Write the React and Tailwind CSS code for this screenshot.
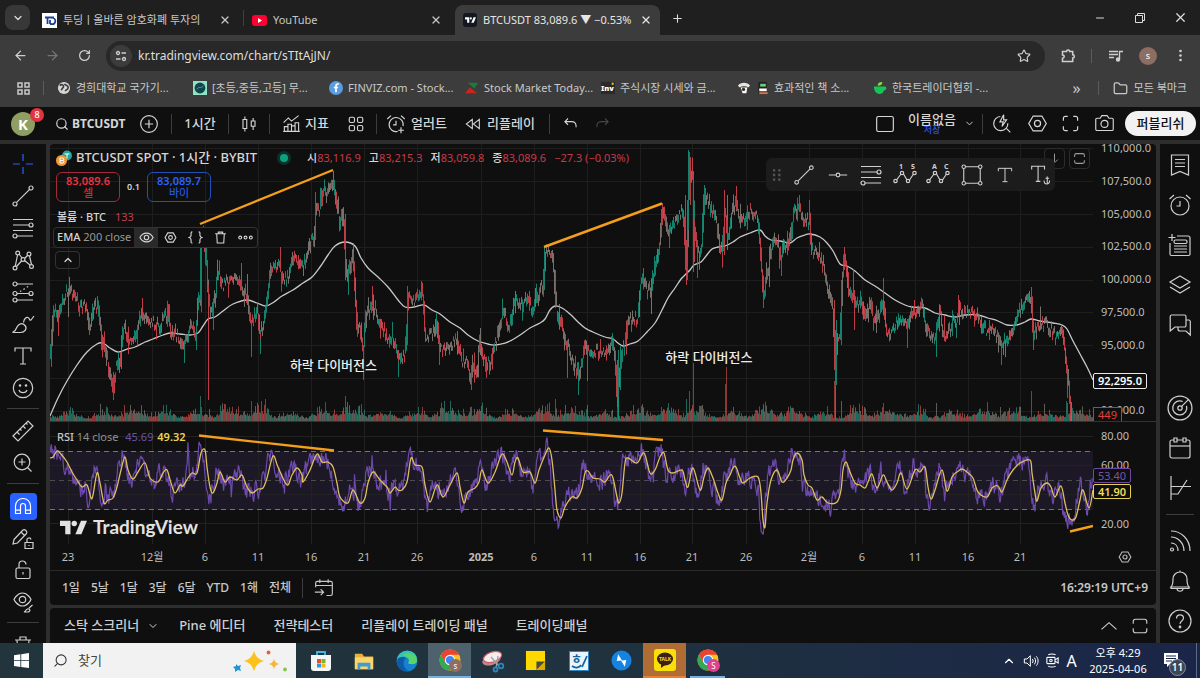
import React from "react";
import { X, Plus, ChevronDown, ChevronUp, ArrowLeft, ArrowRight, RotateCw, Star, Search, Folder, Minus } from "lucide-react";

const kr = "font-['Noto_Sans','Noto_Sans_CJK_KR',sans-serif]";

// small seeded generator so that the chart looks the same on every load
const makeRandom = (seed) => () => {
    seed = (seed * 1664525 + 1013904223) % 4294967296;
    return seed / 4294967296;
};

const parse = (text) => text.trim().split(/\s+/).map((pair) => pair.split(",").map(Number));

const sample = (points, x) => {
    if (x <= points[0][0]) return points[0][1];
    for (let i = 1; i < points.length; i++) {
        if (x <= points[i][0]) {
            const [x0, y0] = points[i - 1];
            const [x1, y1] = points[i];
            return y0 + ((y1 - y0) * (x - x0)) / (x1 - x0 || 1);
        }
    }
    return points[points.length - 1][1];
};

const smooth = (points) => {
    let d = `M${points[0][0]} ${points[0][1]}`;
    for (let i = 1; i < points.length; i++) {
        const [x0, y0] = points[i - 1];
        const [x1, y1] = points[i];
        const before = points[i - 2] || points[i - 1];
        const after = points[i + 1] || points[i];
        const c1 = [x0 + (x1 - before[0]) / 6, y0 + (y1 - before[1]) / 6];
        const c2 = [x1 - (after[0] - x0) / 6, y1 - (after[1] - y0) / 6];
        d += `C${c1.map((n) => n.toFixed(1)).join(" ")} ${c2.map((n) => n.toFixed(1)).join(" ")} ${x1} ${y1}`;
    }
    return d;
};

const price = parse(`50,358 52,337 53,313 57,310 58,317 62,300 70,290 75,298 80,307 83,303 87,307 90,330 93,310 97,303 100,327 102,343 104,350 107,360 110,373 113,390 115,370 118,367 121,350 123,327 125,330 128,340 133,340 137,327 142,313 147,322 153,323 158,327 163,320 168,313 171,337 173,330 177,337 180,337 183,347 187,337 192,325 196,333 198,300 200,293 201,255 202,225 205,247 207,270 209,307 211,307 213,310 216,290 218,267 222,285 227,283 233,280 239,280 243,290 247,297 250,320 253,320 257,307 260,333 263,327 267,300 271,267 275,267 280,267 283,283 288,277 293,260 298,260 303,267 307,255 310,243 314,237 316,207 320,213 323,187 327,197 330,187 333,177 337,203 340,223 343,213 346,270 348,277 353,250 355,290 357,330 360,327 363,353 366,317 372,303 378,317 383,327 388,340 393,337 398,353
403,357 406,350 408,297 413,303 422,290 424,313 425,337 430,337 433,333 437,322 439,350 445,350 452,343 457,342 462,362 467,362 471,380 473,353 475,377 478,360 480,340 483,362 489,365 493,350 497,340 500,323 503,313 510,327 514,300 520,307 527,298 533,310 537,300 541,285 543,295 544,267 546,250 552,257 554,273 556,307 560,320 564,337 568,347 573,360 578,377 582,363 585,343 587,353 593,352 600,352 607,353 612,343 615,357 617,400 620,373 622,353 625,343 628,323 633,320 638,320 640,287 643,280 648,293 652,283 657,257 660,240 662,207 665,220 668,237 673,223 678,215 683,213 685,250 687,273 688,207 689,160 691,170 693,183 694,227 698,257 702,243 704,193 707,198 712,212 717,227 720,250 723,253 725,207 728,237 732,213 736,203 738,215 743,220 750,213 758,215
760,243 762,273 764,300 767,270 768,283 770,253 774,240 778,243 781,263 784,243 788,250 791,233 794,212 799,208 803,217 807,222 810,218 811,250 815,250 820,255 825,273 829,293 833,310 835,357 836,373 837,340 840,340 842,287 844,257 847,273 849,300 852,290 856,310 861,300 866,323 870,297 874,327 878,317 883,297 886,330 892,332 897,322 902,320 908,330 912,310 917,315 922,305 927,330 930,338 936,333 940,313 943,333 947,338 952,322 957,320 959,310 963,315 970,313 977,317 980,320 985,330 992,332 998,337 1002,353 1005,340 1012,332 1017,318 1023,302 1028,300 1031,293 1033,337 1037,328 1042,323 1047,325 1055,337 1062,333 1064,347 1067,373 1069,387 1071,417 1072,430`);

const ema = parse(`50,416 58,398 67,381 77,365 87,352 97,344 103,343 110,348 118,352 127,349 135,347 145,342 153,339 163,335 170,333 180,334 190,335 198,333 203,326 208,319 215,317 223,311 233,304 247,300 257,303 266,306 274,302 282,296 293,290 303,283 312,277 320,267 328,255 335,246 345,242 355,246 361,258 368,268 378,277 388,287 398,300 405,307 414,307 424,305 432,310 440,314 450,322 460,328 468,335 478,341 488,344 495,345 505,343 512,340 520,335 530,328 540,323 545,319 550,310 555,306 562,308 570,314 578,322 585,328 595,333 605,337 613,339 618,343 623,346 630,344 638,341 647,332 655,323 662,310 668,298 675,288 681,279 686,274 690,270 694,265 701,262 706,256 712,249 718,247 725,246 733,242 740,237 750,233 760,230 765,236 771,240 780,241 790,243 797,238 805,235 810,234 820,237 827,243 833,251 840,264 847,266 855,271 865,280 875,286 885,293 895,300 905,305 912,307 925,308 935,313 945,315 955,317 965,315 978,315 988,318 998,321 1007,325 1017,325 1025,322 1031,319 1040,321 1053,323 1062,325 1067,329 1073,341 1080,354 1087,367 1093,380`);

const rsiAverage = parse(`50,458 53,457 57,451 60,453 67,462 72,472 77,480 82,487 87,485 91,498 93,495 97,473 100,483 104,503 108,500 113,498 117,487 121,470 125,457 128,470 133,479 138,472 145,463 150,478 158,482 163,473 167,470 171,483 175,493 180,485 183,486 188,478 192,473 197,473 201,453 205,450 207,467 210,487 213,493 217,483 220,472 225,482 230,477 237,480 242,475 247,487 252,493 258,489 263,488 267,478 273,456 278,467 287,485 292,475 297,468 302,475 303,482 310,470 317,454 322,462 328,462 333,467 337,483 340,497 348,503 353,490 360,503 365,498 368,483 373,472 380,480 387,487 390,493 395,487 398,490
402,490 407,482 411,458 415,465 422,467 425,485 430,502 437,485 443,497 450,485 457,473 460,487 464,503 468,492 475,488 479,482 482,470 488,483 495,472 500,458 503,454 507,462 512,475 515,462 518,458 523,472 530,472 535,483 539,470 545,455 549,448 552,460 555,490 557,510 561,518 565,507 572,497 577,498 582,488 585,473 588,471 593,478 600,479 605,482 610,475 613,478 617,497 619,503 622,493 625,463 628,458 637,463 644,453 650,473 655,470 660,457 664,453 668,470 673,473 682,470 685,480 688,487 693,468 700,490 704,477 708,468 713,478 718,493 722,500 726,483 730,475 733,468 736,467 740,478 743,483 750,478 758,477 761,493 763,520 765,527 767,503 771,480 777,470 782,482 787,478 791,470 793,460 797,453
802,460 804,475 808,485 812,488 817,500 822,497 828,503 837,502 841,490 843,470 846,462 850,472 855,483 860,485 865,488 868,482 872,474 877,488 883,475 887,482 892,490 897,483 901,473 907,489 915,470 920,472 925,467 928,487 931,499 935,490 942,470 947,491 952,477 957,472 962,469 967,472 973,478 978,492 987,497 992,488 998,486 1002,492 1007,480 1013,470 1020,463 1030,460 1032,473 1035,493 1037,501 1041,488 1047,483 1051,487 1055,497 1061,486 1065,503 1068,515 1072,520 1076,517 1080,500 1083,490 1089,508 1093,490`);

// long wicks: x, top, bottom, colour
const wicks = [
    [68, 290, 317, "n"], [58, 310, 336, "r"], [113, 380, 400, "g"], [142, 298, 318, "r"], [168, 304, 318, "r"], [184, 340, 363, "g"], [196, 330, 350, "g"],
    [200, 248, 300, "g"], [201, 248, 312, "g"], [205, 248, 258, "r"], [207, 260, 290, "r"], [208, 285, 400, "r"], [213, 300, 330, "g"], [241, 263, 290, "r"], [247, 274, 305, "n"],
    [251, 320, 357, "g"], [260, 330, 354, "g"], [280, 247, 272, "r"], [315, 192, 240, "g"], [333, 171, 190, "n"], [345, 214, 280, "r"], [348, 270, 295, "g"],
    [353, 243, 262, "n"], [363, 345, 380, "g"], [372, 286, 305, "r"], [398, 350, 377, "g"], [407, 286, 345, "g"], [421, 281, 298, "r"], [439, 340, 365, "g"], [471, 365, 390, "g"], [480, 328, 355, "n"],
    [489, 360, 372, "r"], [544, 248, 290, "g"], [555, 270, 308, "r"], [567, 340, 378, "r"], [578, 375, 395, "g"], [587, 345, 381, "r"], [612, 333, 350, "g"], [617, 360, 407, "r"],
    [618, 350, 420, "g"], [620, 345, 390, "g"], [643, 268, 285, "r"], [651, 285, 314, "n"], [662, 203, 225, "r"], [669, 225, 248, "g"], [685, 195, 270, "r"], [686, 240, 285, "r"], [687, 200, 280, "g"], [688, 150, 230, "g"], [689, 152, 200, "g"],
    [690, 158, 205, "r"], [693, 175, 272, "r"], [694, 220, 262, "r"], [697, 240, 278, "g"], [704, 185, 215, "g"], [705, 188, 205, "r"], [722, 235, 262, "g"], [724, 190, 255, "r"],
    [727, 195, 250, "n"], [736, 186, 210, "r"], [763, 280, 308, "g"], [781, 255, 276, "g"], [799, 195, 212, "r"], [809, 200, 225, "g"], [834, 300, 370, "r"], [835, 330, 420, "g"],
    [836, 320, 385, "g"], [841, 280, 345, "g"], [844, 247, 270, "r"], [853, 269, 300, "r"], [854, 290, 330, "r"], [883, 278, 300, "g"], [907, 320, 348, "g"], [914, 300, 315, "r"], [936, 325, 357, "g"],
    [958, 295, 315, "r"], [959, 300, 325, "n"], [989, 320, 340, "r"], [1001, 345, 365, "g"], [1031, 287, 305, "r"], [1033, 320, 350, "r"], [1067, 365, 398, "g"],
];

const volumeSpikes = { 200: 25, 201: 14, 209: 12, 251: 20, 255: 15, 265: 22, 258: 16, 345: 25, 346: 14, 555: 22, 587: 16, 586: 12, 617: 30, 618: 24, 661: 14, 686: 22, 689: 30, 693: 58, 692: 16, 725: 37, 726: 54, 762: 12, 790: 15, 834: 40, 835: 34, 841: 20, 853: 16, 883: 18, 936: 18, 1000: 14, 1020: 14, 1031: 30, 1066: 20, 1067: 18 };
const redSpikes = [345, 555, 693, 726, 834, 1031];

const buildCandles = () => {
    const random = makeRandom(77);
    const paths = { g: "", r: "", n: "" };
    let kind = "r";
    for (let x = 50; x < 1072; x++) {
        const open = sample(price, x - 0.5);
        const close = sample(price, x + 0.8);
        const drift = (random() - 0.5) * 11;
        const wick = random() < 0.12 ? 8 : 0;
        const top = Math.min(open, close) + drift - 1 - random() * 4 - (random() < 0.5 ? wick : 0);
        const bottom = Math.max(open, close) + drift + 1 + random() * 4 + (random() < 0.5 ? wick : 0);
        const slope = close - open;
        const pick = random();
        if (pick < 0.42) kind = "n";
        else if (pick < 0.62) kind = random() < 0.5 ? "g" : "r";
        else kind = slope < 0 ? "g" : "r";
        paths[kind] += `M${x + 0.5} ${top.toFixed(1)}V${bottom.toFixed(1)}`;
    }
    wicks.forEach(([x, top, bottom, color]) => {
        paths[color] += `M${x + 0.5} ${top}V${bottom}`;
    });
    return paths;
};

const buildVolume = () => {
    const random = makeRandom(9);
    const paths = { g: "", r: "", n: "" };
    for (let x = 50; x < 1093; x++) {
        const swell = 0.9 + 0.6 * Math.sin(x / 5) + 0.4 * Math.sin(x / 17);
        let height = 2 + random() * 3 + Math.abs(swell) * 2.5 + Math.pow(random(), 4) * 9 * Math.abs(swell);
        if (volumeSpikes[x]) height = volumeSpikes[x];
        let kind = "n";
        const pick = random();
        if (pick < 0.28) kind = "g";
        else if (pick < 0.52) kind = "r";
        if (height > 20) kind = redSpikes.includes(x) ? "r" : "g";
        paths[kind] += `M${x + 0.5} 421V${(421 - height).toFixed(1)}`;
    }
    return paths;
};

const buildRsi = () => {
    const random = makeRandom(31);
    let d = "";
    let swing = 0;
    for (let x = 50; x <= 1093; x += 0.7) {
        const lead = sample(rsiAverage, x + 2);
        const slope = lead - sample(rsiAverage, x - 3);
        swing = swing * 0.4 + (random() - 0.5) * 17;
        if (random() < 0.03) swing += (random() - 0.5) * 52;
        const y = Math.max(436, Math.min(534, lead + slope * 0.3 + swing));
        d += `${d ? "L" : "M"}${x.toFixed(1)} ${y.toFixed(1)}`;
    }
    return d;
};

const candles = buildCandles();
const volume = buildVolume();
const rsiLine = buildRsi();

const dates = [
    ["23", 68], ["12월", 152], ["6", 205], ["11", 258], ["16", 311], ["21", 364], ["26", 417], ["2025", 481], ["6", 534],
    ["11", 587], ["16", 640], ["21", 692], ["26", 746], ["2월", 809], ["6", 862], ["11", 915], ["16", 968], ["21", 1020],
];

const Glyph = ({ size = 24, width = 1.2, children, className = "" }) => (
    <svg width={size} height={size} viewBox="0 0 24 24" fill="none" stroke="currentColor" strokeWidth={width} className={`shrink-0 ${className}`} aria-hidden="true">
        {children}
    </svg>
);

const IconButton = ({ label, className = "", children }) => (
    <button type="button" aria-label={label} className={`flex items-center justify-center shrink-0 ${className}`}>
        {children}
    </button>
);

const Divider = () => <span className="w-px h-5 bg-[#3d3d3d] shrink-0" />;

const TrendGlyph = (props) => (
    <Glyph {...props}>
        <path d="M5.6 18.4 18.4 5.6" />
        <circle cx="20" cy="4" r="2" />
        <circle cx="4" cy="20" r="2" />
    </Glyph>
);

const FibGlyph = (props) => (
    <Glyph {...props}>
        <path d="M2 3.5h20M2 9h16M2 14.5h20M6 20h16" />
        <circle cx="20" cy="9" r="2" />
        <circle cx="4" cy="20" r="2" />
    </Glyph>
);

const TextGlyph = (props) => (
    <Glyph {...props}>
        <path d="M4 7.5V4h16v3.5M12 4v16M9 20h6" />
    </Glyph>
);

const HexGlyph = (props) => (
    <Glyph {...props}>
        <path d="M7 3.5h10l5 8.5-5 8.5H7L2 12z" />
        <circle cx="12" cy="12" r="3.5" />
    </Glyph>
);

const CornersGlyph = (props) => (
    <Glyph {...props}>
        <path d="M3 8.500V5.500A2.500 2.500 0 0 1 5.500 3H8.500M15.500 3h3A2.500 2.500 0 0 1 21 5.500v3M21 15.500v3a2.500 2.500 0 0 1-2.500 2.500h-3M8.500 21h-3A2.500 2.500 0 0 1 3 18.500v-3" />
    </Glyph>
);

const FrameGlyph = (props) => (
    <Glyph {...props}>
        <path d="M3 9V6a3 3 0 0 1 3-3h12a3 3 0 0 1 3 3v3M3 15v3a3 3 0 0 0 3 3h12a3 3 0 0 0 3-3v-3" />
    </Glyph>
);

const EyeGlyph = (props) => (
    <Glyph {...props}>
        <path d="M1.500 12S5 5 12 5s10.500 7 10.500 7S19 19 12 19 1.500 12 1.500 12z" />
        <circle cx="12" cy="12" r="3.600" />
    </Glyph>
);

const AlarmGlyph = ({ add, ...props }) => (
    <Glyph {...props}>
        {add ? <path d="M20.500 14.500A8.500 8.500 0 1 0 14 21M18 16v7M14.500 19.500h7" /> : <circle cx="12" cy="13" r="9" />}
        <path d="M12 8v5H8.500M1.500 6 6 2M22.500 6 18 2" />
    </Glyph>
);

const TvMark = ({ className }) => (
    <svg viewBox="0 0 36 20" className={className} fill="currentColor" aria-hidden="true">
        <path d="M0 1h14v18H7V8H0z" />
        <circle cx="19" cy="4.600" r="3.600" />
        <path d="M28 1h8l-7.500 18h-8z" />
    </svg>
);

const ChromeLogo = ({ badge, color }) => (
    <svg viewBox="0 0 28 28" className="w-7 h-7" aria-hidden="true">
        <circle cx="14" cy="14" r="10.500" fill="#fbc116" />
        <path d="M4.900 8.700A10.500 10.500 0 0 0 14 24.500L18.600 16.600 9.400 16.600z" fill="#34a853" />
        <path d="M4.900 8.700A10.500 10.500 0 0 1 23.100 8.700H14L9.400 16.600z" fill="#ea4335" />
        <circle cx="14" cy="14" r="5.200" fill="#fff" />
        <circle cx="14" cy="14" r="4.100" fill="#4285f4" />
        <circle cx="19.500" cy="19.500" r="6.500" fill={color} />
        <text x="19.500" y="22.500" fontSize="8" fontFamily="Noto Sans" textAnchor="middle" fill="#fff">{badge}</text>
    </svg>
);

/* ---------- browser ---------- */

const BrowserTab = ({ icon, title, active, className = "" }) => (
    <div className={`flex items-center h-[30px] ${active ? "bg-[#3c3c3c] rounded-t-lg text-[#e6e6e6]" : "text-[#c7c7c7]"} ${className}`}>
        {icon}
        <span className="ml-[6px] flex-1 min-w-0 overflow-hidden whitespace-nowrap text-[11px]">{title}</span>
        <IconButton label="탭 닫기" className="w-7 h-6"><X size={12} strokeWidth={2.500} /></IconButton>
    </div>
);

const TabStrip = () => (
    <div className="flex items-end h-[35px] bg-[#1f1f1f] text-[#dcdcdc]">
        <IconButton label="탭 검색" className="ml-[5px] mb-[5px] w-[25px] h-[25px] rounded-lg bg-[#383838]"><ChevronDown size={12} strokeWidth={2.500} /></IconButton>
        <BrowserTab
            className="w-[213px] pl-3 pr-1"
            title="투딩ㅣ올바른 암호화폐 투자의"
            icon={
                <svg viewBox="0 0 15 15" className="w-[15px] h-[15px] shrink-0">
                    <rect width="15" height="15" fill="#fff" />
                    <path d="M3 4.500h9M5.500 4.500v6.500M8 11V7M8 11h1.500a3 3 0 0 0 1.500-6" stroke="#1c3f94" strokeWidth="1.800" fill="none" />
                </svg>
            }
        />
        <span className="w-px h-4 mb-[9px] bg-[#3f3f3f]" />
        <BrowserTab
            className="w-[206px] pl-2"
            title="YouTube"
            icon={
                <svg viewBox="0 0 15 11" className="w-[15px] h-[11px] shrink-0">
                    <rect width="15" height="11" rx="3" fill="#f03" />
                    <path d="M6 3v5l4-2.500z" fill="#fff" />
                </svg>
            }
        />
        <BrowserTab
            active
            className="ml-[5px] w-[205px] pl-2"
            title="BTCUSDT 83,089.6 ▼ −0.53%"
            icon={<span className="flex items-center justify-center w-[14px] h-[14px] rounded-[3px] bg-[#131722] text-white shrink-0"><TvMark className="w-[11px]" /></span>}
        />
        <IconButton label="새 탭" className="mb-1 w-[34px] h-[26px]"><Plus size={13} /></IconButton>
        <div className="ml-auto flex h-full">
            <IconButton label="최소화" className="w-10"><Minus size={12} strokeWidth={2} /></IconButton>
            <IconButton label="이전 크기로" className="w-10">
                <svg viewBox="0 0 10 10" width="10" height="10" fill="none" stroke="currentColor"><path d="M.5 2.500h7v7h-7zM2.500 2.500v-2h7v7h-2" /></svg>
            </IconButton>
            <IconButton label="닫기" className="w-10"><X size={15} strokeWidth={2} /></IconButton>
        </div>
    </div>
);

const AddressRow = () => (
    <div className="flex items-center h-[41px] bg-[#3c3c3c] text-[#d0d0d0]">
        <IconButton label="뒤로" className="ml-1 w-8"><ArrowLeft size={15} /></IconButton>
        <IconButton label="앞으로" className="w-8 text-[#757575]"><ArrowRight size={15} /></IconButton>
        <IconButton label="새로고침" className="w-8"><RotateCw size={13} strokeWidth={2.300} /></IconButton>
        <label className="ml-[6px] flex items-center flex-1 h-[30px] rounded-full bg-[#282828] pl-1">
            <span className="flex items-center justify-center w-[22px] h-[22px] rounded-full bg-[#3c3c3c]">
                <svg viewBox="0 0 12 12" width="12" height="12" fill="none" stroke="currentColor" strokeWidth="1.300">
                    <circle cx="3" cy="3" r="1.500" /><path d="M6.500 3H11M1 9h4.500" /><circle cx="9" cy="9" r="1.500" />
                </svg>
            </span>
            <input aria-label="주소창" defaultValue="kr.tradingview.com/chart/sTItAjJN/" className="flex-1 ml-[6px] bg-transparent text-xs text-[#dedede] outline-none" />
            <Star size={14} className="mr-[14px]" />
        </label>
        <IconButton label="확장 프로그램" className="ml-2 w-[30px]">
            <svg viewBox="0 0 15 15" width="15" height="15" fill="none" stroke="currentColor" strokeWidth="1.500"><path d="M1.500 3.500h4a1.600 1.600 0 0 1 3.200 0h3v3.300a1.600 1.600 0 0 1 0 3.200v3.500H1.500v-3.200a1.700 1.700 0 0 0 0-3.400z" /></svg>
        </IconButton>
        <span className="ml-2 w-px h-[14px] bg-[#5c5c5c]" />
        <IconButton label="미디어 제어" className="ml-2 w-8">
            <svg viewBox="0 0 14 12" width="14" height="12" fill="none" stroke="currentColor" strokeWidth="1.400"><path d="M0 1.500h9M0 4.500h9M0 7.500h5M10.500 9.500V1.500H14" /><circle cx="9" cy="9.500" r="1.500" fill="currentColor" /></svg>
        </IconButton>
        <IconButton label="프로필" className="w-8"><span className="w-[18px] h-[18px] rounded-full bg-[#8d6e63] text-white text-[9px] leading-[17px]">s</span></IconButton>
        <IconButton label="메뉴" className="w-8">
            <svg viewBox="0 0 3 13" width="3" height="13" fill="currentColor"><circle cx="1.500" cy="2" r="1.300" /><circle cx="1.500" cy="6.500" r="1.300" /><circle cx="1.500" cy="11" r="1.300" /></svg>
        </IconButton>
        <span className="w-1" />
    </div>
);

const bookmarks = [
    {
        title: "경희대학교 국가기...",
        icon: <><circle cx="7.500" cy="7.500" r="6.500" fill="#d6d6d6" /><path d="M3 5c2-2 4-1 4 1S4 8 5 10M8 3c1 2 4 1 4 4s-3 2-3 4" stroke="#3c3c3c" strokeWidth="1.800" fill="none" /></>,
    },
    {
        title: "[초등,중등,고등] 무...",
        icon: <><rect width="15" height="15" fill="#8fe3c4" /><circle cx="7.500" cy="7.500" r="5.800" fill="#12454a" /><path d="M4 9c2-4 5 0 7-4" stroke="#4f9ea0" fill="none" /></>,
    },
    {
        title: "FINVIZ.com - Stock...",
        icon: <><circle cx="7.500" cy="7.500" r="7.500" fill="#5b9be0" /><path d="M10.500 3.500C8 2.500 7.500 4 7.500 6v6M5.200 7h4.500" stroke="#fff" strokeWidth="1.800" fill="none" /></>,
    },
    {
        title: "Stock Market Today...",
        icon: <><path d="M3 2h11l-4 6z" fill="#1e7a3b" /><path d="M0 13l5-6 8 6z" fill="#d0211c" /></>,
    },
    {
        title: "주식시장 시세와 금...",
        icon: <><rect y="1" width="15" height="13" fill="#2a2a2a" /><text x="0" y="11" fontSize="8" fontFamily="Noto Sans" fontWeight="900" fill="#fff">Inv</text><circle cx="12.500" cy="3" r="1.300" fill="#f5a623" /></>,
    },
    {
        title: "효과적인 책 소...",
        icon: <><path d="M1 5c3-4 10-4 13 0l-2 2c-2-2-7-2-9 0z" fill="#e8e4dc" /><path d="M4 7h7l-1 6H6z" fill="#fff" /><circle cx="7" cy="9" r="1.800" fill="#35302c" /></>,
        extra: <><rect x="1" y="1" width="9" height="13" fill="#222" /><path d="M3 3h6v3H3z" fill="#6bd07a" /><path d="M2 8h8v3H2z" fill="#fff" /><path d="M2 12h9v2H2z" fill="#e0714a" /></>,
    },
    {
        title: "한국트레이더협회 -...",
        icon: <><path d="M1 6h11c3-1 3 4 0 4-1 3-3 4-5 4-4 0-6-4-6-8z" fill="#17c258" /><path d="M5 5c0-3 2-4 5-4 0 3-2 4-5 4z" fill="#8bdc3a" /></>,
    },
];

const BookmarkBar = () => (
    <div className="flex items-center h-[31px] bg-[#3c3c3c] pb-[7px] text-[11px] text-[#c9c9c9] whitespace-nowrap">
        <IconButton label="앱" className="ml-4 w-[14px]">
            <svg viewBox="0 0 13 13" width="13" height="13" fill="none" stroke="currentColor" strokeWidth="1.500"><path d="M1 1h4v4H1zM8 1h4v4H8zM1 8h4v4H1zM8 8h4v4H8z" /></svg>
        </IconButton>
        <span className="ml-[13px] mr-[13px] w-px h-[14px] bg-[#5c5c5c]" />
        <div className="flex">
            {bookmarks.map((item) => (
                <a key={item.title} href="#bookmark" className="flex items-center w-[136px]">
                    <svg viewBox="0 0 15 15" className="w-[14px] h-[14px] shrink-0">{item.icon}</svg>
                    {item.extra && <svg viewBox="0 0 12 15" className="ml-[6px] w-3 h-[14px] shrink-0">{item.extra}</svg>}
                    <span className="ml-[5px]">{item.title}</span>
                </a>
            ))}
        </div>
        <IconButton label="북마크 더보기" className="ml-auto w-5 text-[16px] leading-none">»</IconButton>
        <span className="ml-[11px] mr-[14px] w-px h-[14px] bg-[#5c5c5c]" />
        <a href="#all" className="flex items-center gap-[6px] mr-[13px]"><Folder size={15} />모든 북마크</a>
    </div>
);

/* ---------- chart page ---------- */

const TopBar = () => (
    <div className="flex items-center h-[33px] bg-[#0f0f0f] text-[#d6d6d6] text-[13px] font-medium whitespace-nowrap">
        <button type="button" className="relative ml-[11px] w-6 h-6 shrink-0 rounded-full bg-[#8f9e62] text-white text-[15px] leading-6 font-bold">
            K
            <span className="absolute -top-[4px] left-[19px] w-[14px] h-[14px] rounded-full bg-[#e0343f] text-[9px] leading-[14px] font-medium">8</span>
        </button>
        <button type="button" className="flex items-center gap-[3px] ml-5 w-[72px] text-xs font-bold"><Search size={14} strokeWidth={2} className="shrink-0" />BTCUSDT</button>
        <IconButton label="심볼 비교" className="w-11"><Glyph size={20} width={1.400}><circle cx="12" cy="12" r="10" /><path d="M12 7v10M7 12h10" /></Glyph></IconButton>
        <Divider />
        <button type="button" className="w-14">1시간</button>
        <Divider />
        <IconButton label="캔들" className="w-10"><Glyph size={18} width={1.500}><path d="M4 6h5v12H4zM6.500 2v4M6.500 18v4M15 8h5v7h-5zM17.500 4v4M17.500 15v5" /></Glyph></IconButton>
        <Divider />
        <button type="button" className="flex items-center gap-1 w-[66px] pl-3">
            <Glyph size={19} width={1.400}><path d="M1.500 22h21M3 22v-6h4.500v6M7.500 22v-9H12v9M12 22v-7h4.500v7M16.500 22V11H21v11M2 11l6-6 4 4 9-7" /></Glyph>지표
        </button>
        <IconButton label="템플릿" className="w-10"><Glyph size={18} width={1.500}><rect x="3" y="3" width="7" height="7" rx="2" /><rect x="14" y="3" width="7" height="7" rx="2" /><rect x="3" y="14" width="7" height="7" rx="2" /><rect x="14" y="14" width="7" height="7" rx="2" /></Glyph></IconButton>
        <Divider />
        <button type="button" className="flex items-center gap-[5px] w-20 pl-[9px]"><AlarmGlyph add size={20} width={1.400} />얼러트</button>
        <button type="button" className="flex items-center gap-[6px] w-[92px] pl-2"><Glyph size={16} width={1.600}><path d="M11 5v14L2 12zM21.500 5v14l-9-7z" /></Glyph>리플레이</button>
        <Divider />
        <IconButton label="되돌리기" className="w-10"><Glyph size={15} width={1.700}><path d="M8 4 3 9l5 5M3 9h11c5 0 7 3 7 8v1" /></Glyph></IconButton>
        <IconButton label="다시하기" className="w-6 text-[#474747]"><Glyph size={15} width={1.700}><path d="m16 4 5 5-5 5M21 9H10c-5 0-7 3-7 8v1" /></Glyph></IconButton>
        <div className="ml-auto flex items-center">
            <IconButton label="레이아웃" className="w-11"><Glyph size={20} width={1.400}><rect x="2" y="3" width="20" height="18" rx="2" /></Glyph></IconButton>
            <button type="button" className="w-[50px] leading-[12px]">이름없음<span className="block text-[9px] leading-[9px] text-[#2f55e0]">저장</span></button>
            <IconButton label="레이아웃 관리" className="w-[25px]"><ChevronDown size={11} strokeWidth={2} /></IconButton>
            <Divider />
            <IconButton label="빠른 검색" className="w-[38px]"><Glyph size={20} width={1.400}><path d="M10 3a8.500 8.500 0 1 0 9 8M17 17l5 5M14 1 9.500 9.500h4L12 15l5.500-8H14z" /></Glyph></IconButton>
            <IconButton label="설정" className="w-[33px]"><HexGlyph size={21} width={1.400} /></IconButton>
            <IconButton label="전체 화면" className="w-[33px]"><CornersGlyph size={19} width={1.500} /></IconButton>
            <IconButton label="스냅샷" className="w-[34px] mr-1"><Glyph size={21} width={1.300}><path d="M2 7.500A1.500 1.500 0 0 1 3.500 6H7l2-3h6l2 3h3.500A1.500 1.500 0 0 1 22 7.500v11a1.500 1.500 0 0 1-1.500 1.500h-17A1.500 1.500 0 0 1 2 18.500z" /><circle cx="12" cy="12.500" r="4" /></Glyph></IconButton>
            <button type="button" className="w-[71px] h-[25px] mr-1 rounded-full bg-[#f2f2f2] text-[#0f0f0f]">퍼블리쉬</button>
        </div>
    </div>
);

const drawTools = [
    ["십자선", <Glyph key="i" className="text-[#2962ff]"><path d="M12 2v7M12 15v7M2 12h7M15 12h7" /></Glyph>],
    ["추세줄", <TrendGlyph key="i" />],
    ["피보나치", <FibGlyph key="i" />],
    ["패턴", <Glyph key="i"><path d="M4.300 18 6.500 7M8 6l3 4M13.500 10.500 16.500 7.500M18.500 8l2 8.500M19 17l-5.500-4.500M10.500 13 5.500 18.500" /><circle cx="6.700" cy="5" r="1.900" /><circle cx="18" cy="6" r="1.900" /><circle cx="12" cy="11.500" r="1.900" /><circle cx="4" cy="20" r="1.900" /><circle cx="20.500" cy="18.500" r="1.900" /></Glyph>],
    ["예측", <Glyph key="i"><path d="M6 4h16M6 13.500h12M6 20h16" /><path d="M9 11.500 18 6" strokeDasharray="1.500 2.500" /><circle cx="4" cy="4" r="2" /><circle cx="4" cy="13.500" r="2" /><circle cx="20" cy="13.500" r="2" /><circle cx="4" cy="20" r="2" /></Glyph>],
    ["브러쉬", <Glyph key="i"><path d="M1.500 20.500h8c4.500 0 7-4 4.500-7s-6.500-2-8 1.500c-.8 2.500-1.500 4-4.500 5.500zM12.500 10.500C13 7 15 5 17 5.500s1 3.500 3 2.500l3-4" /></Glyph>],
    ["문자", <TextGlyph key="i" />],
    ["아이콘", <Glyph key="i"><circle cx="12" cy="12" r="9.700" /><path d="M8 14c1 3.500 7 3.500 8 0" /><circle cx="9" cy="9.500" r=".7" /><circle cx="15" cy="9.500" r=".7" /></Glyph>],
    null,
    ["자", <Glyph key="i"><path d="M2 17 17 2l5 5L7 22zM6 13l2.500 2.500M9 10l1.500 1.500M12 7l2.500 2.500M15 4l1.500 1.500" /></Glyph>],
    ["확대", <Glyph key="i"><circle cx="11" cy="11" r="7.800" /><path d="M11 7.500v7M7.500 11h7M16.500 16.500l4 4" /></Glyph>],
    null,
    ["자석", <span key="i" className="flex items-center justify-center w-[27px] h-[27px] rounded bg-[#2962ff] text-white"><Glyph size={20} width={1.400}><path d="M3 21v-9a9 9 0 0 1 18 0v9h-6v-9a3 3 0 0 0-6 0v9zM3 17h6M15 17h6" /></Glyph></span>],
    ["드로잉 유지", <Glyph key="i"><path d="m3 13.500 9-9.500c1.500-1.500 5 1.500 3.500 3.500l-9 9.500L2 18zM10 6l4 4M14 16.500h8v6h-8zM16 16.500v-2a2 2 0 0 1 4-1M18 19v1" /></Glyph>],
    ["잠금", <Glyph key="i"><rect x="5" y="10" width="14" height="10.500" rx="1.500" /><path d="M8 10V6.500a3.500 3.500 0 0 1 7 0M12 14v2.500" /></Glyph>],
    ["숨기기", <Glyph key="i"><path d="M3 9.500S6 3 11.500 3 20 9.500 20 9.500 17 16 11.500 16 3 9.500 3 9.500z" /><circle cx="11.500" cy="9.500" r="3.200" /><path d="M13 22h4c3-.5 2-4-.5-3s-1 2-3.500 3zM18 18l3.500-3" /></Glyph>],
    null,
    ["삭제", <Glyph key="i"><path d="M4 7h16M9 7V4h6v3M6 7l1 14h10l1-14" /></Glyph>],
];

const LeftTools = () => (
    <nav aria-label="드로잉" className="w-[46px] shrink-0 flex flex-col items-center pt-1 bg-[#0f0f0f] text-[#cfcfcf] overflow-hidden">
        {drawTools.map((tool, i) =>
            tool ? (
                <IconButton key={i} label={tool[0]} className="w-full h-8">{tool[1]}</IconButton>
            ) : (
                <span key={i} className="mt-1 mb-[6px] w-8 h-px shrink-0 bg-[#3d3d3d]" />
            )
        )}
    </nav>
);

const RightTools = () => (
    <nav aria-label="위젯" className="w-10 shrink-0 flex flex-col items-center pt-px pb-[2px] bg-[#0f0f0f] text-[#cfcfcf]">
        <IconButton label="왓치리스트" className="h-10"><Glyph><path d="M3.500 2h17v20L12 18.500 3.500 22zM7 6.500h10M7 10h10M7 13.500h10" /></Glyph></IconButton>
        <IconButton label="얼러트" className="h-10"><AlarmGlyph /></IconButton>
        <IconButton label="뉴스" className="h-10"><Glyph><path d="M9 3h11a2 2 0 0 1 2 2v16a1.500 1.500 0 0 1-1.500 1.500h-17A1.500 1.500 0 0 1 2 21V10M4 1v7M.5 4.500h7M6 13h13M6 16h13M6 19h13" /><rect x="6" y="7" width="13" height="3.500" rx="1.500" /></Glyph></IconButton>
        <IconButton label="오브젝트 트리" className="h-10"><Glyph><path d="m12 3 10 6-10 6L2 9zM2 14l10 6 10-6" /></Glyph></IconButton>
        <IconButton label="챗" className="h-10"><Glyph><path d="M3.500 2h13A1.500 1.500 0 0 1 18 3.500v9a1.500 1.500 0 0 1-1.500 1.500H7l-4.800 4V3.500A1.500 1.500 0 0 1 3.500 2zM18 7h3a1.500 1.500 0 0 1 1.300 1.500V22L18 18h-6a2 2 0 0 1-2-2v-2" /></Glyph></IconButton>
        <IconButton label="스크리너" className="mt-auto h-10"><Glyph size={26}><circle cx="12" cy="12" r="11" /><path d="M18 10a6.500 6.500 0 1 1-3.500-4" /><circle cx="12" cy="12" r="2" /><path d="m13.500 10.500 6-6" /></Glyph></IconButton>
        <IconButton label="캘린더" className="h-10"><Glyph><rect x="2" y="4" width="20" height="18" rx="2" /><path d="M2 10h20" /><path d="M6 2h3v4H6zM15 2h3v4h-3z" fill="#0f0f0f" /></Glyph></IconButton>
        <IconButton label="파인" className="h-10"><Glyph><path d="M3 0v24M3 18h7l9-14M3 10.500h20" /></Glyph></IconButton>
        <span className="w-7 h-px my-[6px] bg-[#3d3d3d]" />
        <IconButton label="스트림" className="h-10"><Glyph><path d="M3 2c10 0 19 8 19 20M3 8c7 0 13 6 13 14M3 14c4 0 7 3 7 8" /><circle cx="4" cy="20.500" r="1.500" /></Glyph></IconButton>
        <IconButton label="알림" className="h-10"><Glyph><path d="M3 18c1.500-1.500 2-3 2-8 0-4 3-7 7-7s7 3 7 7c0 5 .5 6.500 2 8zM3 18v1.500h18V18M9 20c.5 3 5.500 3 6 0M12 3V1.500" /></Glyph></IconButton>
        <IconButton label="도움말" className="h-10"><Glyph><circle cx="12" cy="12" r="11" /><path d="M8.500 9.500c0-5 7-4.500 7-.5 0 3-3.500 3-3.500 6" /><circle cx="12" cy="18" r=".8" /></Glyph></IconButton>
    </nav>
);

const ohlc = [["시", "83,116.9"], ["고", "83,215.3"], ["저", "83,059.8"], ["종", "83,089.6"]];

const Legend = () => (
    <div className="absolute top-[5px] left-[3px] flex flex-col items-start text-[#d6d6d6] whitespace-nowrap">
        <div className="flex items-center h-[18px] pl-[3px]">
            <svg viewBox="0 0 16 16" className="w-4 h-4">
                <circle cx="11" cy="5.500" r="5" fill="#22a79a" /><path d="M8.500 4h5M11 4v4.500" stroke="#fff" />
                <circle cx="5.500" cy="10.500" r="5.500" fill="#f09a37" /><path d="M4 8h2.500a1.200 1.200 0 0 1 0 2.500H4zM4 10.500h3a1.300 1.300 0 0 1 0 2.500H4z" stroke="#fff" fill="none" />
            </svg>
            <span className="ml-1 text-[13px] font-medium">BTCUSDT SPOT · 1시간 · BYBIT</span>
            <span className="ml-5 flex items-center justify-center w-[14px] h-[14px] rounded-full bg-[#08322b]"><span className="w-2 h-2 rounded-full bg-[#0da27f]" /></span>
            <div className="flex gap-2 ml-4 text-[11px]">
                {ohlc.map(([name, value]) => <span key={name} className="font-medium">{name}<span className="font-normal text-[#c73a4a]">{value}</span></span>)}
                <span className="text-[#c73a4a]">−27.3 (−0.03%)</span>
            </div>
        </div>
        <div className="flex items-center mt-[5px] ml-[3px] text-[11px] font-semibold leading-[12px]">
            <button type="button" className="w-16 h-[30px] rounded-md border border-[#a52a3a] text-[#f0313f]">83,089.6<span className="block font-normal">셀</span></button>
            <span className="w-[27px] text-center text-[9px]">0.1</span>
            <button type="button" className="w-16 h-[30px] rounded-md border border-[#2350b8] text-[#2962ff]">83,089.7<span className="block font-normal">바이</span></button>
        </div>
        <div className="mt-[7px] ml-1 text-[11px] leading-4 font-medium">볼륨 · BTC <span className="ml-[6px] font-normal text-[#c73a4a]">133</span></div>
        <div className="flex items-center mt-[2px] h-[21px] rounded-sm border border-[#333] bg-[#0f0f0f] text-[11px]">
            <span className="pl-[3px] pr-[3px] font-medium">EMA <span className="font-normal text-[#999]">200 close</span></span>
            <IconButton label="숨기기" className="w-6 h-full bg-[#2a2a2a]"><EyeGlyph size={15} width={1.800} /></IconButton>
            <IconButton label="설정" className="w-[25px]"><HexGlyph size={13} width={2} /></IconButton>
            <IconButton label="소스 코드" className="w-[25px]"><Glyph size={15} width={1.800}><path d="M7 3C4 3 5 6 5 8s0 3-3 4c3 1 3 2 3 4s-1 5 2 5M17 3c3 0 2 3 2 5s0 3 3 4c-3 1-3 2-3 4s1 5-2 5" /></Glyph></IconButton>
            <IconButton label="지우기" className="w-[25px]"><Glyph size={13} width={2}><path d="M2 5h20M8 5V2h8v3M5 5l1 17h12l1-17" /></Glyph></IconButton>
            <IconButton label="더보기" className="w-6"><Glyph size={15} width={1.800}><circle cx="3.500" cy="12" r="2.300" /><circle cx="12" cy="12" r="2.300" /><circle cx="20.500" cy="12" r="2.300" /></Glyph></IconButton>
        </div>
        <IconButton label="접기" className="mt-[3px] ml-[2px] w-[25px] h-[18px] border border-[#333] rounded-sm"><ChevronUp size={12} strokeWidth={2.500} /></IconButton>
    </div>
);

const Wave = ({ from, to }) => (
    <Glyph>
        <path d="M3.500 17 8 11M10.500 11l3.500 6M16.500 17l4-6" />
        <circle cx="2.500" cy="18" r="1.700" /><circle cx="9" cy="10" r="1.700" /><circle cx="15" cy="18" r="1.700" /><circle cx="21.500" cy="10" r="1.700" />
        <text x="6" y="6" fontSize="7" fontFamily="Noto Sans" fontWeight="700" fill="currentColor" stroke="none">{from}</text>
        <text x="18" y="6" fontSize="7" fontFamily="Noto Sans" fontWeight="700" fill="currentColor" stroke="none">{to}</text>
    </Glyph>
);

const FloatingTools = () => (
    <div className="absolute top-[14px] right-[38px] flex items-center h-[33px] rounded-md bg-[#1e1e1e]/95 text-[#cfcfcf]">
        <IconButton label="이동" className="w-[21px] text-[#555]"><Glyph size={14} width={0}><path fill="currentColor" d="M5 2h4v4H5zM14 2h4v4h-4zM5 10h4v4H5zM14 10h4v4h-4zM5 18h4v4H5zM14 18h4v4h-4z" /></Glyph></IconButton>
        <IconButton label="추세줄" className="w-[34px]"><TrendGlyph size={22} /></IconButton>
        <IconButton label="가로줄" className="w-[33px]"><Glyph size={22}><path d="M2 12h8M14 12h8" /><circle cx="12" cy="12" r="2" /></Glyph></IconButton>
        <IconButton label="피보나치" className="w-[34px]"><FibGlyph /></IconButton>
        <IconButton label="엘리엇 파동" className="w-[33px]"><Wave from="1" to="5" /></IconButton>
        <IconButton label="ABC 파동" className="w-[34px]"><Wave from="A" to="C" /></IconButton>
        <IconButton label="네모" className="w-[33px]"><Glyph size={22}><path d="M5 3h14M5 21h14M3 5v14M21 5v14" /><circle cx="3" cy="3" r="1.900" /><circle cx="21" cy="3" r="1.900" /><circle cx="3" cy="21" r="1.900" /><circle cx="21" cy="21" r="1.900" /></Glyph></IconButton>
        <IconButton label="문자" className="w-[34px]"><TextGlyph size={20} /></IconButton>
        <IconButton label="고정 문자" className="w-[33px]"><Glyph size={22}><path d="M4 6V2.500h14V6M11 2.500V19M8.500 19h5M21 13.500V22M17.500 18c0 5 6 5 6 0M19 15.500h4" /></Glyph></IconButton>
    </div>
);

const PricePane = () => (
    <div className="relative flex min-h-0 basis-0 grow-[277]">
        <div className="relative flex-1 min-w-0">
            <svg viewBox="50 144 1043 277" preserveAspectRatio="none" className="absolute inset-0 w-full h-full">
                <g stroke="#1e1e1e">
                    {[148.5, 181.500, 214.500, 247.500, 280.500, 312.500, 345.500, 378.500, 411.500].map((y) => <path key={y} d={`M50 ${y}H1093`} />)}
                    {dates.map(([, x]) => <path key={x} d={`M${x + 0.5} 144V421`} />)}
                </g>
                <g opacity="0.620">
                    <path d={volume.n} stroke="#8d8a80" />
                    <path d={volume.g} stroke="#2f9c88" />
                    <path d={volume.r} stroke="#e0524f" />
                </g>
                <path d={smooth(ema)} fill="none" stroke="#c8c8c8" strokeWidth="1.300" />
                <g opacity="0.850">
                    <path d={candles.n} stroke="#8a827c" />
                    <path d={candles.g} stroke="#16957e" />
                    <path d={candles.r} stroke="#dc4450" />
                </g>
                <path d="M200 224 333 170M544 247 662 203.500" stroke="#f59e1b" strokeWidth="2.400" />
            </svg>
            <Legend />
            <span className="absolute left-[23%] top-[77%] text-[13px] leading-[17px] font-medium text-[#ededed]">하락 다이버전스</span>
            <span className="absolute left-[59%] top-[74%] text-[13px] leading-[17px] font-medium text-[#ededed]">하락 다이버전스</span>
            <div className="absolute top-1 right-[3px] flex gap-1 text-[#9a9a9a]">
                <IconButton label="아래로" className="w-[21px] h-[21px] rounded border border-[#2c2c2c]"><Glyph size={13} width={1.800}><path d="M12 3v17M6 14l6 6 6-6" /></Glyph></IconButton>
                <IconButton label="최대화" className="w-[21px] h-[21px] rounded border border-[#2c2c2c]"><FrameGlyph size={13} width={2} /></IconButton>
            </div>
            <FloatingTools />
        </div>
        <div className="w-[63px] shrink-0 flex flex-col justify-between pl-2 pb-[7px] text-[11px] leading-[8px] text-[#bdbdbd]">
            {["110,000.0", "107,500.0", "105,000.0", "102,500.0", "100,000.0", "97,500.0", "95,000.0", "", "90,000.0"].map((label, i) => <span key={i} className="h-2">{label}</span>)}
        </div>
        <span className="absolute right-[9px] bottom-[32px] w-[54px] h-4 border border-[#e8e8e8] rounded-[2px] bg-[#0f0f0f] text-center text-[11px] leading-[14px] font-semibold text-white">92,295.0</span>
        <span className="absolute right-[34px] bottom-0 w-[29px] h-[14px] border border-b-0 border-[#c0393b] bg-[#0f0f0f] text-center text-[11px] leading-[13px] text-[#e0403f]">449</span>
    </div>
);

const RsiPane = () => (
    <div className="relative flex min-h-0 basis-0 grow-[122] border-t border-[#333]">
        <div className="relative flex-1 min-w-0">
            <svg viewBox="50 422 1043 122" preserveAspectRatio="none" className="absolute inset-0 w-full h-full">
                <rect x="50" y="451" width="1043" height="59" fill="#7e57c2" opacity="0.120" />
                <g stroke="#222">
                    {[436.500, 465.500, 494.500, 523.500].map((y) => <path key={y} d={`M50 ${y}H1093`} />)}
                    {dates.map(([, x]) => <path key={x} d={`M${x + 0.5} 422V544`} />)}
                </g>
                <path d="M50 451.500H1093M50 509.500H1093" stroke="#757575" strokeDasharray="5 4" />
                <path d="M50 480.500H1093" stroke="#4c4c4c" strokeDasharray="5 4" />
                <path d={rsiLine} fill="none" stroke="#6c4aab" strokeWidth="1.200" />
                <path d={smooth(rsiAverage)} fill="none" stroke="#dfbf5c" strokeWidth="1.300" />
                <path d="M199 435.500 334 450.500M543 430.500 663 440M1070 531.500 1093 526" stroke="#f59e1b" strokeWidth="2.400" />
            </svg>
            <div className="absolute top-[6px] left-[7px] text-[11px] leading-[17px] text-[#909090]">
                <span className="font-medium text-[#c8c8c8]">RSI</span> 14 close <span className="ml-1 text-[#6f51a6]">45.69</span> <span className="ml-px font-semibold text-[#ecd452]">49.32</span>
            </div>
            <div className="absolute left-[10px] bottom-[5px] flex items-center gap-[6px] text-[#e2e2e2]">
                <TvMark className="w-[27px]" />
                <span className="font-['Lato','Noto_Sans',sans-serif] text-[19px] leading-6 font-bold">TradingView</span>
            </div>
        </div>
        <div className="w-[63px] shrink-0 flex flex-col justify-between pl-2 pt-[10px] pb-4 text-[11px] leading-[8px] text-[#bdbdbd]">
            {["80.00", "60.00", "", "20.00"].map((label, i) => <span key={i} className="h-2">{label}</span>)}
        </div>
        <span className="absolute right-[25px] top-[46px] w-[38px] h-[15px] border border-[#6a4aa3] rounded-[2px] bg-[#0f0f0f] text-center text-[11px] leading-[13px] text-[#7554b0]">53.40</span>
        <span className="absolute right-[25px] top-[62px] w-[38px] h-[15px] border border-[#e5d04d] rounded-[2px] bg-[#0f0f0f] text-center text-[11px] leading-[13px] font-semibold text-[#f0dc55]">41.90</span>
    </div>
);

const TimeAxis = () => (
    <div className="flex items-center h-[26px] shrink-0 text-[11px] text-[#bdbdbd]">
        <div className="flex flex-1 min-w-0">
            <span style={{ flex: `${dates[0][1] - 50} 0 0px` }} />
            {dates.map(([label, x], i) => (
                <span key={x} style={{ flex: `${(dates[i + 1] ? dates[i + 1][1] : 1093) - x} 0 0px` }}>
                    <span className={`flex justify-center w-0 whitespace-nowrap ${label === "2025" ? "font-bold" : ""}`}>{label}</span>
                </span>
            ))}
        </div>
        <IconButton label="축 설정" className="w-[63px]"><HexGlyph size={14} width={1.900} /></IconButton>
    </div>
);

const RangeBar = () => (
    <div className="flex items-center h-[35px] shrink-0 gap-[11px] pl-3 pr-2 border-t border-[#2b2b2b] text-xs font-medium text-[#c6c6c6]">
        {["1일", "5날", "1달", "3달", "6달", "YTD", "1해", "전체"].map((range) => <button key={range} type="button">{range}</button>)}
        <Divider />
        <IconButton label="날짜로 이동"><Glyph size={20} width={1.400}><path d="M2 11V6a2 2 0 0 1 2-2h16a2 2 0 0 1 2 2v13a2 2 0 0 1-2 2h-5M2 9h20M7 1.500V6M17 1.500V6M1 17h10M8 13.500l3.500 3.500L8 20.500" /></Glyph></IconButton>
        <button type="button" className="ml-auto text-xs font-semibold">16:29:19 UTC+9</button>
    </div>
);

const BottomTabs = () => (
    <div className="flex items-center h-[35px] mt-[3px] shrink-0 gap-7 pl-[14px] pr-[7px] rounded-t bg-[#0f0f0f] text-[13px] font-medium text-[#cfcfcf]">
        <button type="button" className="flex items-center gap-2 -mr-2">스탁 스크리너<ChevronDown size={12} /></button>
        <button type="button">Pine 에디터</button>
        <button type="button">전략테스터</button>
        <button type="button">리플레이 트레이딩 패널</button>
        <button type="button">트레이딩패널</button>
        <div className="ml-auto flex items-center gap-3">
            <IconButton label="패널 열기"><Glyph size={20} width={1.400}><path d="m3 16 9-8 9 8" /></Glyph></IconButton>
            <IconButton label="패널 최대화"><FrameGlyph size={18} width={1.500} /></IconButton>
        </div>
    </div>
);

/* ---------- taskbar ---------- */

const apps = [
    ["Store", "", <svg key="i" viewBox="0 0 24 24" className="w-6 h-6"><path d="M8 6V3h8v3" stroke="#3fb7ea" strokeWidth="1.800" fill="none" /><path d="M2 6h20v13a3 3 0 0 1-3 3H5a3 3 0 0 1-3-3z" fill="#f5f5f5" /><path d="M8 10h4v4H8z" fill="#e5502b" /><path d="M12.500 10h4v4h-4z" fill="#7ab52c" /><path d="M8 14.500h4v4H8z" fill="#2a9bdc" /><path d="M12.500 14.500h4v4h-4z" fill="#f4b81c" /></svg>],
    ["탐색기", "", <svg key="i" viewBox="0 0 24 24" className="w-[22px] h-[22px]"><path d="M2 4h8l2 3h10v14H2z" fill="#e9b03c" /><path d="M2 8h20v13H2z" fill="#fbd569" /><path d="M5 14h14v7h-3v-3H8v3H5z" fill="#3f9bd4" /></svg>],
    ["Edge", "", <svg key="i" viewBox="0 0 24 24" className="w-6 h-6"><circle cx="12" cy="12" r="10.500" fill="#1682cf" /><path d="M2 10C4 2 14-1 20 5c4 5 1 10-4 10-3 0-3-1-2-3 0-4-8-6-12-2z" fill="#37c3b6" /><path d="M13 4c6 0 9 4 9 8 0 2-3 4-6 3-3 0-3-1-2-3 1-3-2-5-6-5 1-2 3-3 5-3z" fill="#58d46c" /><path d="M2 13c1-5 6-6 9-4-4 3-3 10 2 12.500C7 23 2 19 2 13z" fill="#0e5aa8" /></svg>],
    ["Chrome", "bg-[#4e626d] border-b-2 border-[#76b0e0]", <ChromeLogo key="i" badge="s" color="#8d6e63" />],
    ["캡처 도구", "", <svg key="i" viewBox="0 0 24 24" className="w-6 h-6"><ellipse cx="10.500" cy="11" rx="9.500" ry="5" transform="rotate(-18 10.500 11)" fill="#b98a90" /><ellipse cx="11.500" cy="8" rx="9.500" ry="5" transform="rotate(-18 11.500 8)" fill="#f4eced" stroke="#d35b67" strokeWidth="1.200" /><path d="M10 8l8 9M17 7l-2 12" stroke="#9aa4ab" strokeWidth="1.300" /><circle cx="14.500" cy="20.500" r="2" fill="none" stroke="#3183b8" strokeWidth="1.800" /><circle cx="20" cy="17" r="2.300" fill="none" stroke="#3183b8" strokeWidth="1.800" /></svg>],
    ["스티커 메모", "", <svg key="i" viewBox="0 0 22 22" className="w-[21px] h-[21px]"><path d="M1 1h20v20H1z" fill="#ffd800" /><path d="M12 12h9l-9 9z" fill="#4b4a40" /><path d="M12 21l9-9v9z" fill="#d9ad00" /></svg>],
    ["한글", "", <svg key="i" viewBox="0 0 20 20" className="w-5 h-5"><rect x=".5" y=".5" width="19" height="19" fill="#eaf5fb" stroke="#2b86c4" /><text x="7.500" y="12.500" fontSize="12" fontFamily="Noto Sans CJK KR" fontWeight="700" textAnchor="middle" fill="#17629c">ㅎ</text><path d="M3 15c4 3 8 1 9-1M13 16l5-11" stroke="#17629c" strokeWidth="1.800" fill="none" /></svg>],
    ["Thunder", "", <svg key="i" viewBox="0 0 22 22" className="w-[21px] h-[21px]"><circle cx="11" cy="11" r="10.500" fill="#1583e0" /><path d="M7.500 4.500 6 11.500l4.500-.5 4 6.500 1.500-7-4.500.5z" fill="#fff" /></svg>],
    ["카카오톡", "bg-[#b06c35] border-b-2 border-[#ee7d2d]", <svg key="i" viewBox="0 0 22 22" className="w-[22px] h-[22px]"><rect width="22" height="22" rx="3" fill="#fadf0b" /><ellipse cx="11" cy="10" rx="8" ry="6.500" fill="#3b1f1d" /><path d="M7 15v4l4-3z" fill="#3b1f1d" /><text x="11" y="12" fontSize="5" fontWeight="700" fontFamily="Noto Sans" textAnchor="middle" fill="#fadf0b">TALK</text></svg>],
    ["Chrome 2", "ml-1 border-b-2 border-[#76b0e0]", <ChromeLogo key="i" badge="S" color="#e0408c" />],
];

const Taskbar = () => (
    <div className="flex items-stretch h-[35px] shrink-0 bg-linear-to-r from-[#22353c] via-[#1f323e] to-[#1b2548] text-white whitespace-nowrap">
        <IconButton label="시작" className="w-[43px]">
            <svg viewBox="0 0 16 16" width="15" height="15" fill="#fff"><path d="M0 2.300 6.800 1.300v6.300H0zM7.700 1.200 16 0v7.600H7.700zM0 8.400h6.800v6.400L0 13.800zM7.700 8.400H16V16l-8.300-1.200z" /></svg>
        </IconButton>
        <label className="flex items-center w-[253px] bg-[#f2f2f2] text-[#333]">
            <Search size={15} strokeWidth={1.700} className="ml-[10px] -scale-x-100" />
            <input aria-label="찾기" placeholder="찾기" className="flex-1 min-w-0 ml-[10px] bg-transparent text-[13px] placeholder:text-[#444] outline-none" />
            <svg viewBox="0 0 56 24" className="w-14 h-6 mr-2">
                <path d="M22 2c2 6 4 8 10 10-6 2-8 4-10 10-2-6-4-8-10-10 6-2 8-4 10-10z" fill="#fcc21b" />
                <path d="M42 10c1 3 2 4 5 5-3 1-4 2-5 5-1-3-2-4-5-5 3-1 4-2 5-5z" fill="#f9b43a" />
                <path d="M4 15l2 2 3-1-1 3 1 3-3-1-3 2 0-3-2-2 3-1z" fill="#2196d3" />
                <circle cx="36.500" cy="3.500" r="1.900" fill="#e0623c" /><circle cx="53" cy="20.500" r="1.900" fill="#8bc34a" />
            </svg>
        </label>
        <div className="flex ml-[3px]">
            {apps.map(([name, style, icon]) => <IconButton key={name} label={name} className={`${name === "Chrome 2" ? "w-[35px]" : "w-[43px]"} ${style}`}>{icon}</IconButton>)}
        </div>
        <div className="ml-auto flex items-center">
            <IconButton label="숨겨진 아이콘" className="w-[22px]"><ChevronUp size={14} /></IconButton>
            <IconButton label="볼륨" className="w-[21px]"><Glyph size={16} width={1.500}><path d="M2 9h4l5-5v16l-5-5H2zM14 9c1.500 2 1.500 4 0 6M17 7c2.500 3 2.500 7 0 10M20 5c3.500 4 3.500 10 0 14" /></Glyph></IconButton>
            <IconButton label="카메라" className="w-[22px]"><Glyph size={15} width={1.700}><rect x="3" y="7" width="13" height="10" rx="1" /><path d="m16 11 5-3v8l-5-3M5 3c3-2 9-2 12 0M5 21c3 2 9 2 12 0" /><circle cx="9.500" cy="12" r="2" /></Glyph></IconButton>
            <span className="w-[17px] text-center text-base leading-none">A</span>
            <div className="w-[76px] text-center text-[11px] leading-4"><p>오후 4:29</p><p>2025-04-06</p></div>
            <button type="button" aria-label="알림" className="relative w-10 h-full">
                <svg viewBox="0 0 16 16" className="absolute left-[7px] top-[9px] w-4 h-4"><path d="M1 1h14v11H7l-3 3v-3H1z" fill="#fff" /><path d="M3 4h10M3 6.500h10M3 9h6" stroke="#1b2548" /></svg>
                <span className="absolute left-[13px] top-4 w-[17px] h-[17px] rounded-full bg-[#3d4655] border border-[#8b8f98] text-[10px] leading-[15px] font-semibold">11</span>
            </button>
            <span className="w-1 h-full border-l border-[#5d6c84]" />
        </div>
    </div>
);

const App = () => {
    return (
        <div className={`flex flex-col h-screen overflow-hidden bg-[#2e2e2e] ${kr}`}>
            <TabStrip />
            <AddressRow />
            <BookmarkBar />
            <TopBar />
            <main className="flex flex-1 min-h-0 gap-1 pt-1">
                <LeftTools />
                <div className="flex flex-col flex-1 min-w-0">
                    <section className="flex flex-col flex-1 min-h-0 rounded bg-[#0f0f0f]">
                        <PricePane />
                        <RsiPane />
                        <TimeAxis />
                        <RangeBar />
                    </section>
                    <BottomTabs />
                </div>
                <RightTools />
            </main>
            <Taskbar />
        </div>
    );
};

export default App;
